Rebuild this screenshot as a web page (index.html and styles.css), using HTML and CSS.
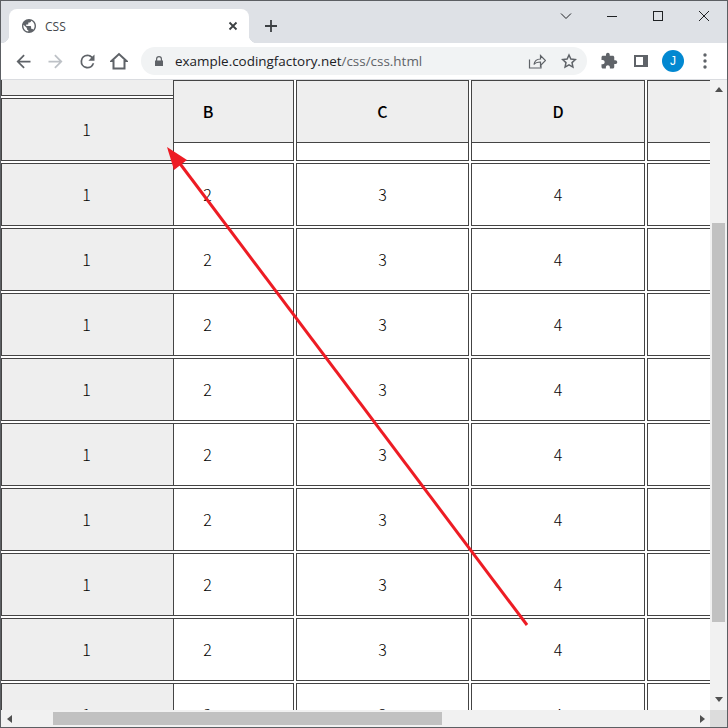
FILE: index.html
```html
<!DOCTYPE html>
<html lang="en">
<head>
<meta charset="utf-8">
<title>CSS</title>
<link rel="stylesheet" href="styles.css">
</head>
<body>
<div class="window">
  <header class="tabstrip">
    <div class="tab">
      <svg class="favicon" viewBox="2 2 20 20"><path fill="#5f6368" d="M12 2C6.48 2 2 6.48 2 12s4.48 10 10 10 10-4.48 10-10S17.52 2 12 2zm-1 17.93c-3.95-.49-7-3.85-7-7.93 0-.62.08-1.21.21-1.79L9 15v1c0 1.1.9 2 2 2v1.93zm6.9-2.54c-.26-.81-1-1.39-1.9-1.39h-1v-3c0-.55-.45-1-1-1H8v-2h2c.55 0 1-.45 1-1V7h2c1.1 0 2-.9 2-2v-.41c2.93 1.19 5 4.06 5 7.41 0 2.08-.8 3.97-2.1 5.39z"/></svg>
      <span class="tab-title">CSS</span>
      <svg class="tab-close" viewBox="0 0 10 10"><path d="M1.5 1.5l7 7M8.500 1.500l-7 7"/></svg>
    </div>
    <svg class="new-tab" viewBox="0 0 12 12"><path d="M6 0v12M0 6h12"/></svg>
    <div class="win-controls">
      <div class="win-btn"><svg viewBox="0 0 12 7"><path d="M1 1l5 5 5-5"/></svg></div>
      <div class="win-btn"><svg viewBox="0 0 12 12"><path d="M1 6.500h10"/></svg></div>
      <div class="win-btn"><svg viewBox="0 0 12 12"><rect x="1.500" y="1.500" width="9" height="9"/></svg></div>
      <div class="win-btn"><svg viewBox="0 0 12 12"><path d="M1 1l10 10M11 1L1 11"/></svg></div>
    </div>
  </header>

  <nav class="toolbar">
    <div class="tool"><svg class="ico21" viewBox="0 0 24 24"><path fill="#5f6368" d="M20 11H7.800l5.600-5.600L12 4l-8 8 8 8 1.400-1.400L7.800 13H20z"/></svg></div>
    <div class="tool"><svg class="ico21" viewBox="0 0 24 24"><path fill="#bdc1c6" d="M4 11h12.200l-5.600-5.600L12 4l8 8-8 8-1.400-1.400 5.600-5.600H4z"/></svg></div>
    <div class="tool"><svg class="ico21" viewBox="0 0 24 24"><path fill="#5f6368" d="M17.650 6.350A7.960 7.960 0 0 0 12 4a8 8 0 1 0 7.730 10h-2.080A6 6 0 1 1 12 6c1.660 0 3.140.69 4.220 1.780L13 11h7V4z"/></svg></div>
    <div class="tool"><svg class="ico18" viewBox="0 0 18 18"><path class="line2" d="M3.500 16.500V9H1.500L9 2l7.500 7h-2v7.500z"/></svg></div>
    <div class="omnibox">
      <svg class="lock" viewBox="0 0 8 10.500"><path fill="#5f6368" d="M1 4.500V3a3 3 0 0 1 6 0v1.500h1v6H0v-6zm1.200 0h3.600V3a1.800 1.800 0 0 0-3.600 0z"/></svg>
      <span class="url"><span class="host">example.codingfactory.net</span>/css/css.html</span>
      <div class="tool"><svg class="ico18" viewBox="0 0 18 18"><path class="line1" d="M1.500 7.500v8.500h11.500v-3M6 12.500c.5-3.500 3-5.500 6.500-5.500V3.500l5 5-5 5V10c-2.500 0-5 .5-6.500 2.500z"/></svg></div>
      <div class="tool"><svg class="ico16" viewBox="0 0 18 18"><path class="line2s" d="M9 2.200l2.100 4.600 5 .6-3.700 3.400 1 5L9 13.300l-4.400 2.500 1-5L1.900 7.400l5-.6z"/></svg></div>
    </div>
    <div class="tool"><svg class="ico17" viewBox="0 0 24 24"><path fill="#5f6368" d="M20.500 11H19V7c0-1.100-.9-2-2-2h-4V3.500C13 2.120 11.880 1 10.500 1S8 2.120 8 3.500V5H4c-1.100 0-1.990.9-1.990 2v3.800H3.500c1.490 0 2.700 1.210 2.700 2.700s-1.210 2.700-2.700 2.700H2V20c0 1.100.9 2 2 2h3.800v-1.500c0-1.490 1.210-2.700 2.700-2.700 1.490 0 2.700 1.210 2.700 2.700V22H17c1.100 0 2-.9 2-2v-4h1.500c1.380 0 2.500-1.120 2.500-2.500S21.880 11 20.500 11z"/></svg></div>
    <div class="tool"><div class="panel-icon"></div></div>
    <div class="tool"><div class="avatar">J</div></div>
    <div class="tool"><svg class="dots" viewBox="0 0 4 16"><circle cx="2" cy="2" r="1.700"/><circle cx="2" cy="8" r="1.700"/><circle cx="2" cy="14" r="1.700"/></svg></div>
  </nav>

  <main class="viewport">
    <div class="content">
      <div class="frozen">
        <div class="stub"></div>
        <div class="fcell">1</div><div class="fcell">1</div><div class="fcell">1</div>
        <div class="fcell">1</div><div class="fcell">1</div><div class="fcell">1</div>
        <div class="fcell">1</div><div class="fcell">1</div><div class="fcell">1</div>
        <div class="fcell">1</div>
      </div>
      <div class="grid">
        <div class="head col-b"><div class="head-label">B</div></div>
        <div class="head"><div class="head-label">C</div></div>
        <div class="head"><div class="head-label">D</div></div>
        <div class="head"><div class="head-label"></div></div>

        <div class="cell col-b">2</div><div class="cell">3</div><div class="cell">4</div><div class="cell"></div>
        <div class="cell col-b">2</div><div class="cell">3</div><div class="cell">4</div><div class="cell"></div>
        <div class="cell col-b">2</div><div class="cell">3</div><div class="cell">4</div><div class="cell"></div>
        <div class="cell col-b">2</div><div class="cell">3</div><div class="cell">4</div><div class="cell"></div>
        <div class="cell col-b">2</div><div class="cell">3</div><div class="cell">4</div><div class="cell"></div>
        <div class="cell col-b">2</div><div class="cell">3</div><div class="cell">4</div><div class="cell"></div>
        <div class="cell col-b">2</div><div class="cell">3</div><div class="cell">4</div><div class="cell"></div>
        <div class="cell col-b">2</div><div class="cell">3</div><div class="cell">4</div><div class="cell"></div>
        <div class="cell col-b">2</div><div class="cell">3</div><div class="cell">4</div><div class="cell"></div>
      </div>
    </div>
    <aside class="vbar">
      <svg class="arrow" viewBox="0 0 8 5"><path d="M4 0l4 5H0z"/></svg>
      <div class="vthumb"></div>
      <svg class="arrow" viewBox="0 0 8 5"><path d="M0 0h8L4 5z"/></svg>
    </aside>
    <div class="hbar">
      <svg class="arrow-h" viewBox="0 0 5 8"><path d="M5 0v8L0 4z"/></svg>
      <div class="hthumb"></div>
      <svg class="arrow-h" viewBox="0 0 5 8"><path d="M0 0l5 4-5 4z"/></svg>
    </div>
    <div class="corner"></div>
  </main>

  <svg class="annotation" viewBox="0 0 728 728">
    <path class="anno-line" d="M527 625L178 161"/>
    <path class="anno-head" d="M167 147L187 160L174 170z"/>
  </svg>
</div>
</body>
</html>
```

FILE: styles.css
```css
* { box-sizing: border-box; }
html, body { margin: 0; padding: 0; background: #fff; }
body { width: 728px; height: 728px; overflow: hidden; }

.window {
  position: relative;
  width: 728px;
  height: 728px;
  border: 1px solid #5c5f63;
  display: flex;
  flex-direction: column;
  font-family: "Noto Sans CJK KR", "Noto Sans", sans-serif;
  overflow: hidden;
}

/* Tab strip */
.tabstrip {
  height: 42px;
  flex: none;
  background: #dee1e6;
  display: flex;
  align-items: flex-end;
  padding-left: 8px;
}
.tab {
  position: relative;
  width: 240px;
  height: 34px;
  background: #fff;
  border-radius: 8px 8px 0 0;
  display: flex;
  align-items: center;
  padding: 0 10px 0 13px;
}
.tab::before, .tab::after {
  content: "";
  position: absolute;
  bottom: 0;
  width: 8px;
  height: 8px;
}
.tab::before { left: -8px; background: radial-gradient(circle at 0 0, transparent 8px, #fff 8.500px); }
.tab::after { right: -8px; background: radial-gradient(circle at 100% 0, transparent 8px, #fff 8.500px); }
.favicon { width: 14px; height: 14px; flex: none; }
.tab-title {
  margin-left: 9px;
  font: 12px "Open Sans", "Noto Sans", sans-serif;
  color: #45474b;
  flex: 1;
}
.tab-close { width: 10px; height: 10px; flex: none; margin-right: 1px; }
.tab-close path { stroke: #3c4043; stroke-width: 1.800; fill: none; }
.new-tab { width: 12px; height: 12px; margin: 0 0 11px 16px; flex: none; }
.new-tab path { stroke: #3c4043; stroke-width: 1.800; fill: none; }
.win-controls { margin-left: auto; align-self: flex-start; display: flex; }
.win-btn { width: 46px; height: 29px; display: flex; align-items: center; justify-content: center; }
.win-btn svg { width: 12px; height: 12px; }
.win-btn path, .win-btn rect { stroke: #1f2124; stroke-width: 1; fill: none; }

/* Toolbar */
.toolbar {
  height: 37px;
  flex: none;
  background: #fff;
  border-bottom: 1px solid #dadce0;
  display: flex;
  align-items: center;
  padding-left: 6px;
}
.tool { width: 32px; height: 32px; flex: none; display: flex; align-items: center; justify-content: center; }
.ico21 { width: 21px; height: 21px; }
.ico18 { width: 18px; height: 18px; }
.ico17 { width: 18px; height: 18px; }
.ico16 { width: 16px; height: 16px; }
.line2 { fill: none; stroke: #5f6368; stroke-width: 2; stroke-linejoin: miter; }
.line2s { fill: none; stroke: #5f6368; stroke-width: 1.700; stroke-linejoin: miter; }
.line1 { fill: none; stroke: #5f6368; stroke-width: 1.200; }
.omnibox {
  width: 446px;
  height: 28px;
  margin: 0 6px;
  background: #f1f3f4;
  border-radius: 14px;
  display: flex;
  align-items: center;
  padding: 0 2px 0 14px;
  flex: none;
}
.lock { width: 8px; height: 10.500px; flex: none; margin-right: 12px; }
.url {
  flex: 1;
  font: 13.450px "Open Sans", "Noto Sans", sans-serif;
  color: #5f6368;
  white-space: nowrap;
}
.host { color: #202124; }
.panel-icon { width: 14px; height: 12px; border: 2px solid #5f6368; border-right-width: 5px; background: #fff; }
.avatar {
  width: 22px;
  height: 22px;
  border-radius: 50%;
  background: #0288d1;
  color: #fff;
  font: 12px "Liberation Sans", sans-serif;
  display: flex;
  align-items: center;
  justify-content: center;
}
.dots { width: 4px; height: 16px; fill: #5f6368; }

/* Page viewport with scrollbars */
.viewport {
  flex: 1;
  min-height: 0;
  display: grid;
  grid-template-columns: 709px 17px;
  grid-template-rows: 630px 17px;
}
.content {
  overflow: hidden;
  display: flex;
  background: #fff;
  color: #000;
  font-size: 16px;
  font-weight: 300;
}
.frozen { width: 172px; flex: none; display: flex; flex-direction: column; gap: 2px; }
.stub {
  height: 16px;
  flex: none;
  background: #eee;
  border-left: 1px solid #444;
  border-bottom: 1px solid #444;
}
.fcell {
  height: 63px;
  flex: none;
  background: #eee;
  border: 1px solid #444;
  border-right: 0;
  padding: 0 2px 2px 0;
  display: flex;
  align-items: center;
  justify-content: center;
}
.grid {
  flex: none;
  display: grid;
  grid-template-columns: 121px 173px 174px 100px;
  grid-template-rows: 81px;
  grid-auto-rows: 63px;
  gap: 2px;
}
.head { border: 1px solid #444; background: #fff; }
.head-label {
  height: 62px;
  background: #eee;
  border-bottom: 1px solid #444;
  padding-bottom: 2px;
  display: flex;
  align-items: center;
  justify-content: center;
  font-weight: 500;
}
.cell {
  border: 1px solid #444;
  background: #fff;
  padding-bottom: 2px;
  display: flex;
  align-items: center;
  justify-content: center;
}
.cell.col-b { padding-right: 52px; }
.head.col-b .head-label { padding-right: 51px; }

.vbar {
  background: #f1f1f1;
  display: flex;
  flex-direction: column;
  align-items: center;
}
.arrow { width: 8px; height: 5px; flex: none; fill: #505050; margin: 7px 0 0; }
.arrow:last-child { margin: 75px 0 0; }
.vthumb { width: 13px; height: 399px; background: #c1c1c1; margin-top: 131px; flex: none; }
.hbar { background: #f1f1f1; display: flex; align-items: center; padding-left: 6px; }
.arrow-h { width: 5px; height: 8px; flex: none; fill: #505050; }
.hthumb { width: 389px; height: 13px; background: #c1c1c1; margin-left: 41px; flex: none; }
.arrow-h:last-child { margin-left: 258px; }
.corner { background: #dcdcdc; }

/* Red annotation drawn over the screenshot */
.annotation { position: absolute; left: -1px; top: -1px; width: 728px; height: 728px; pointer-events: none; }
.anno-line { stroke: #ed1c24; stroke-width: 3; fill: none; }
.anno-head { fill: #ed1c24; }
```
